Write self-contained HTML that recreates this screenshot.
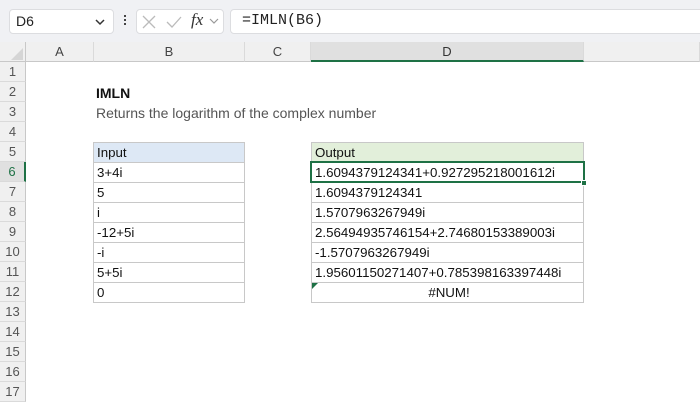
<!DOCTYPE html>
<html><head><style>
*{margin:0;padding:0;box-sizing:border-box}
body{width:700px;height:400px;overflow:hidden;background:#fff;font-family:"Liberation Sans",Arial,sans-serif;position:relative}
.a{position:absolute}
.tb{left:0;top:0;width:700px;height:42px;background:#f0f1f4}
.box{background:#fff;border:1px solid #dcdde0;border-radius:4px}
.ch{top:42px;height:20px;background:#f0f0f0;border-bottom:1px solid #c8c8c8;font-size:13px;color:#444;text-align:center;line-height:20px;border-right:1px solid #dadada}
.rh{left:0;width:26px;height:20px;background:#f0f0f0;border-right:1px solid #c8c8c8;border-bottom:1px solid #dadada;font-size:13px;color:#555;text-align:center;line-height:20px}
.c{height:21px;font-size:13.3px;line-height:20px;padding-left:3px;color:#111;border:1px solid #c8c8c8;white-space:nowrap;overflow:hidden;margin-top:-1px}
</style></head><body>
<div class="a tb"></div>
<div class="a box" style="left:9px;top:9px;width:105px;height:25px"></div>
<div class="a" style="left:16px;top:13px;font-size:14px;color:#222">D6</div>
<svg class="a" style="left:94px;top:17px" width="12" height="10"><path d="M2 3l4 4 4-4" stroke="#333" stroke-width="1.5" fill="none"/></svg>
<div class="a" style="left:124px;top:15px;width:2px;height:2px;background:#444;box-shadow:0 4px 0 #444,0 8px 0 #444"></div>
<div class="a box" style="left:136px;top:9px;width:88px;height:25px"></div>
<svg class="a" style="left:140px;top:13px" width="84" height="18"><path d="M3 3l12 12M15 3L3 15" stroke="#bbb" stroke-width="1.3"/><path d="M27 9l5 5 9-10" stroke="#bbb" stroke-width="1.3" fill="none"/><path d="M70 6l4 4 4-4" stroke="#999" stroke-width="1.2" fill="none"/></svg>
<div class="a" style="left:191px;top:10px;font-family:'Liberation Serif',serif;font-style:italic;font-size:17px;color:#333">fx</div>
<div class="a box" style="left:230px;top:9px;width:475px;height:25px"></div>
<div class="a" style="left:242px;top:12px;font-family:'Liberation Mono',monospace;font-size:15px;color:#222">=IMLN(B6)</div>
<div class="a" style="left:0;top:42px;width:26px;height:20px;background:#f0f0f0;border-right:1px solid #c8c8c8;border-bottom:1px solid #c8c8c8"></div>
<svg class="a" style="left:10px;top:47px" width="14" height="14"><path d="M13 1V13H1z" fill="#d5d5d5"/></svg>
<div class="a ch" style="left:26px;width:68px">A</div>
<div class="a ch" style="left:94px;width:151px">B</div>
<div class="a ch" style="left:245px;width:66px">C</div>
<div class="a ch" style="left:311px;width:273px;background:#e0e0e0;border-bottom:2px solid #1e7145;color:#333">D</div>
<div class="a ch" style="left:584px;width:116px"></div>
<div class="a rh" style="top:62px">1</div><div class="a rh" style="top:82px">2</div><div class="a rh" style="top:102px">3</div><div class="a rh" style="top:122px">4</div><div class="a rh" style="top:142px">5</div>
<div class="a rh" style="top:162px;background:#e0e0e0;color:#1e7145;border-right:2px solid #1e7145">6</div>
<div class="a rh" style="top:182px">7</div><div class="a rh" style="top:202px">8</div><div class="a rh" style="top:222px">9</div><div class="a rh" style="top:242px">10</div><div class="a rh" style="top:262px">11</div><div class="a rh" style="top:282px">12</div><div class="a rh" style="top:302px">13</div><div class="a rh" style="top:322px">14</div><div class="a rh" style="top:342px">15</div><div class="a rh" style="top:362px">16</div><div class="a rh" style="top:382px">17</div>
<div class="a" style="left:96px;top:85px;font-size:14px;font-weight:bold;color:#111">IMLN</div>
<div class="a" style="left:96px;top:105px;font-size:14px;color:#555">Returns the logarithm of the complex number</div>
<div class="a" style="left:93px;top:143px;width:152px">
<div class="c" style="background:#dde8f5">Input</div>
<div class="c">3+4i</div><div class="c">5</div><div class="c">i</div><div class="c">-12+5i</div><div class="c">-i</div><div class="c">5+5i</div><div class="c">0</div>
</div>
<div class="a" style="left:311px;top:143px;width:273px">
<div class="c" style="background:#e2efda">Output</div>
<div class="c">1.6094379124341+0.927295218001612i</div>
<div class="c">1.6094379124341</div>
<div class="c">1.5707963267949i</div>
<div class="c">2.56494935746154+2.74680153389003i</div>
<div class="c">-1.5707963267949i</div>
<div class="c">1.95601150271407+0.785398163397448i</div>
<div class="c" style="text-align:center;position:relative">#NUM!<svg style="position:absolute;left:0;top:0" width="6" height="6"><path d="M0 0H6L0 6z" fill="#1e7145"/></svg></div>
</div>
<div class="a" style="left:310px;top:161px;width:275px;height:22px;border:2px solid #1e7145"></div>
<div class="a" style="left:581px;top:180px;width:6px;height:6px;background:#1e7145;border:1px solid #fff"></div>
</body></html>
